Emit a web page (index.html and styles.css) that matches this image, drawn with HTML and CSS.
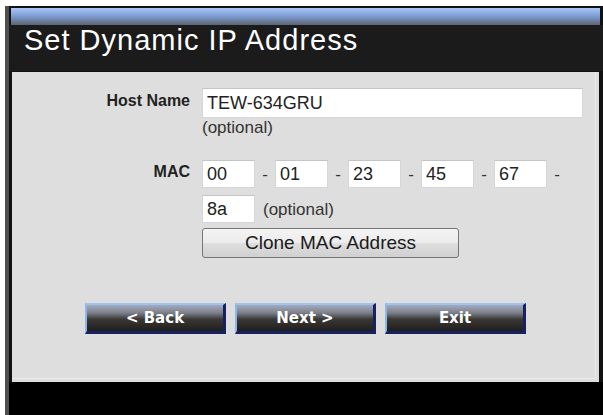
FILE: index.html
```html
<!DOCTYPE html>
<html lang="en">
<head>
  <meta charset="UTF-8">
  <meta name="viewport" content="width=device-width, initial-scale=1.0">
  <title>Set Dynamic IP Address</title>
  <link rel="stylesheet" href="styles.css">
</head>
<body>
  <div class="frame">
    <div class="bar"></div>
    <h1 class="title">Set Dynamic IP Address</h1>
    <div class="panel">
      <form class="form" id="dynForm">
        <label class="label host-label" for="hostName">Host Name</label>
        <div class="field">
          <input type="text" class="text host" id="hostName" value="TEW-634GRU">
        </div>

        <div></div>
        <div class="hint">(optional)</div>

        <label class="label mac-label" for="mac1">MAC</label>
        <div class="mac">
          <input type="text" class="text octet" id="mac1" value="00"><span class="dash">-</span>
          <input type="text" class="text octet" value="01"><span class="dash">-</span>
          <input type="text" class="text octet" value="23"><span class="dash">-</span>
          <input type="text" class="text octet" value="45"><span class="dash">-</span>
          <input type="text" class="text octet" value="67"><span class="dash">-</span>
        </div>

        <div></div>
        <div class="mac mac-last">
          <input type="text" class="text octet" value="8a">
          <span class="hint inline">(optional)</span>
        </div>

        <div></div>
        <div>
          <button type="button" class="clone">Clone MAC Address</button>
        </div>
      </form>

      <div class="nav">
        <button type="button" class="navbtn">&lt; Back</button>
        <button type="button" class="navbtn">Next &gt;</button>
        <button type="button" class="navbtn">Exit</button>
      </div>
    </div>
    <div class="foot"></div>
  </div>
</body>
</html>
```

FILE: styles.css
```css
body {
  margin: 0;
  background-color: #ffffff;
  font-family: "Liberation Sans", Arial, sans-serif;
}

.frame {
  margin: 6px 0 0 5px;
  height: 409px;
  background-color: #111111;
  border-left: 4px solid #4e4e4e;
  padding-top: 2px;
  box-sizing: border-box;
  display: flex;
  flex-direction: column;
}

.bar {
  height: 17px;
  margin: 0 3px 0 2px;
  background: linear-gradient(#a9c7f4, #7f9fd8 45%, #5d6470);
}

.title {
  margin: 0;
  height: 46px;
  padding-left: 15px;
  background-color: #1b1b1b;
  color: #ffffff;
  font-size: 29px;
  font-weight: normal;
  letter-spacing: 1px;
  line-height: 31px;
}

.panel {
  margin: 1px 4px 0 3px;
  height: 310px;
  background-color: #dedede;
  box-shadow: inset -3px -3px 0 #dedede, inset -4px -4px 0 #ebebeb;
}

.foot {
  flex: 1;
  background-color: #000000;
}

.form {
  display: grid;
  grid-template-columns: 178px 1fr;
  column-gap: 12px;
  padding: 16px 16px 0 0;
}

.label {
  text-align: right;
  font-size: 16px;
  font-weight: bold;
  color: #222222;
}

.host-label {
  padding-top: 4px;
}

.mac-label {
  margin-top: 22px;
  padding-top: 3px;
}

.text {
  height: 30px;
  box-sizing: border-box;
  border: 1px solid #d6d6d6;
  border-top-color: #c4c4c4;
  background-color: #ffffff;
  padding: 0 4px;
  font-family: "Liberation Sans", Arial, sans-serif;
  font-size: 18px;
  color: #222222;
  margin: 0;
}

.host {
  width: 381px;
}

.hint {
  font-size: 17px;
  color: #333333;
  height: 20px;
}

.hint.inline {
  height: auto;
  padding: 0 0 0 8px;
}

.mac {
  display: flex;
  align-items: baseline;
  margin-top: 22px;
}

.mac-last {
  margin-top: 7px;
}

.octet {
  width: 53px;
  height: 28px;
}

.dash {
  width: 20px;
  text-align: center;
  font-size: 17px;
  color: #333333;
}

.clone {
  margin-top: 5px;
  width: 257px;
  height: 30px;
  border: 1px solid #767676;
  border-radius: 3px;
  background: linear-gradient(#f4f4f4, #ececec 48%, #dedede 52%, #d0d0d0);
  font-family: "Liberation Sans", Arial, sans-serif;
  font-size: 19px;
  color: #1a1a1a;
  padding: 0;
}

.nav {
  display: flex;
  gap: 9px;
  padding: 45px 0 0 73px;
}

.navbtn {
  width: 141px;
  height: 31px;
  box-sizing: border-box;
  border-style: solid;
  border-width: 2px 3px 3px 2px;
  border-color: #9dc4f2 #17225e #17225e #8db6ea;
  background: linear-gradient(#a2abbd, #7c808a 30%, #3a3835 55%, #201e1c);
  color: #ffffff;
  font-family: "DejaVu Sans", Verdana, sans-serif;
  font-size: 15px;
  font-weight: bold;
  padding: 0;
  cursor: pointer;
}
```
